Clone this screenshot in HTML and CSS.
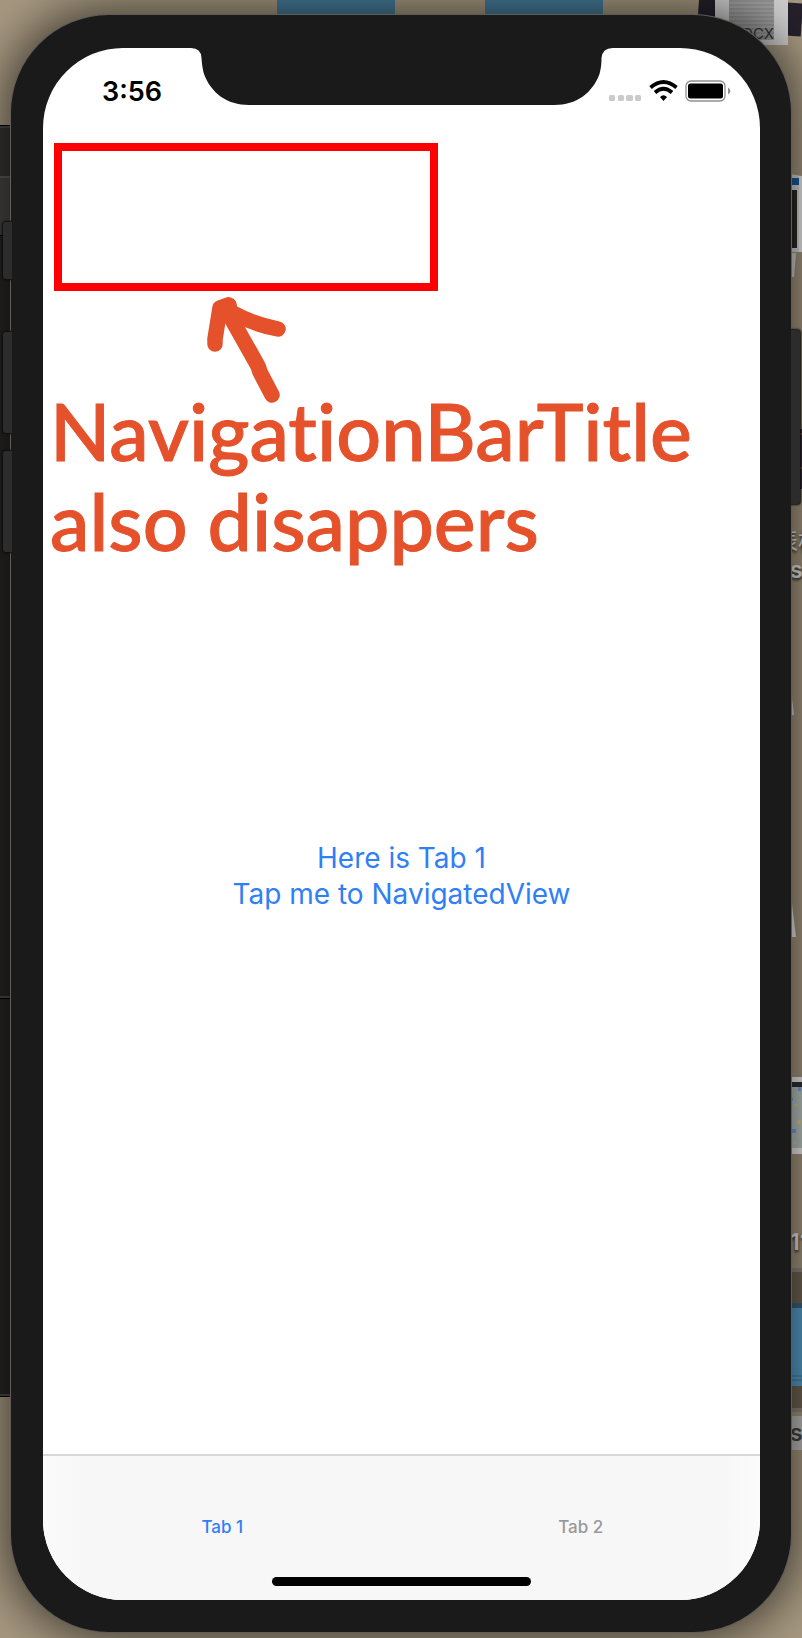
FILE: index.html
```html
<!DOCTYPE html>
<html lang="en">
<head>
<meta charset="utf-8">
<meta name="viewport" content="width=device-width, initial-scale=1">
<title>Tab 1</title>
<link rel="stylesheet" href="styles.css">
</head>
<body>
<div class="desktop">
  <div class="window window-back"></div>
  <div class="window window-front"></div>
  <div class="window window-low"></div>
  <div class="folder folder-a"></div>
  <div class="folder folder-b"></div>
  <div class="sheet"></div>
  <div class="docx"><span class="docx-preview"></span><span class="docx-label">DOCX</span></div>
  <svg class="edge-items" width="12" height="1638" viewBox="0 0 12 1638" aria-hidden="true">
    <path d="M0 174l12 2v76H0z" fill="#d9d9d9"/>
    <path d="M0 178h12v7H0z" fill="#185ca0"/>
    <path d="M0 187h9v65H0z" fill="#d9d9d9"/>
    <path d="M0 190h7v58H0z" fill="#2b2824"/>
    <path d="M9 176h3v76H9z" fill="#eee"/>
    <path d="M0 253h6l-2 24H0z" fill="#d6d6d6"/>
    <path d="M8 429h4v60H8z" fill="#3c2c48"/>
    <path d="M8 434h4M8 468h4" stroke="#a05a2c" stroke-width="2"/>
    <path d="M0 645q4 14 0 36zM0 682l4 33H0z" fill="#e0e0e0"/>
    <path d="M0 888l6 49H0z" fill="#eee"/>
    <path d="M0 1077h12v77H0z" fill="#eee"/>
    <path d="M0 1082h12v5H0z" fill="#303030"/>
    <path d="M0 1087h12v61H0z" fill="#bcc6c1"/>
    <path d="M0 1098h3v3H0zM8 1087h3v4H8zM2 1129h4v4H2z" fill="#7aa5e0"/>
    <path d="M4 1104h4v3H4zM7 1120h4v4H7zM3 1141h3v3H3z" fill="#d8ca98"/>
    <path d="M0 1268h12v140H0z" fill="#706453"/>
    <path d="M0 1268h12v4H0zM0 1408h12v4H0z" fill="#8f867b"/>
    <path d="M0 1303h12v83H0z" fill="#589fc9"/>
    <path d="M0 1303h12v5H0z" fill="#3b637b"/>
    <path d="M0 1376h12M0 1380h12" stroke="#417899"/>
    <path d="M0 1416h12v34H0z" fill="#bfbebd"/>
  </svg>
  <span class="icon-name icon-name-a">表格</span>
  <span class="icon-name icon-name-b">s</span>
  <span class="icon-name icon-name-c">11</span>
  <span class="icon-name icon-name-d">s</span>

  <div class="phone">
    <span class="key key-mute"></span>
    <span class="key key-up"></span>
    <span class="key key-down"></span>
    <span class="key key-power"></span>
    <div class="screen">
      <header class="status">
        <time class="clock">3:56</time>
        <svg class="notch" viewBox="0 0 401 58" preserveAspectRatio="none" aria-hidden="true">
          <path d="M-10 -1V0Q0 0 0.500 10C1 18 2 22 3 26C10 45 26 57 48 57H353C375 57 391 45 398 26C399 22 400 18 400 10Q401 0 411 0V-1Z" fill="#1a1a1a"/>
        </svg>
        <svg class="signals" width="124" height="24" viewBox="0 0 124 24" role="img" aria-label="No signal, Wi-Fi, battery full">
          <g fill="#cbcbcb">
            <rect x="0" y="15" width="6" height="6" rx="1.500"/>
            <rect x="9" y="15" width="6" height="6" rx="1.500"/>
            <rect x="17" y="15" width="7" height="6" rx="1.500"/>
            <rect x="26" y="15" width="6" height="6" rx="1.500"/>
          </g>
          <g fill="none" stroke="#000">
            <path d="M41.500 7.500Q54.500-3.500 67.500 7.500" stroke-width="3.800"/>
            <path d="M46 12.500Q54.500 5 63 12.500" stroke-width="3.800"/>
          </g>
          <path d="M51 17Q54.500 13.500 58 17L54.500 21z"/>
          <rect x="77" y="1" width="39" height="20" rx="5" fill="none" stroke="#8f8f8f" stroke-width="1.300"/>
          <rect x="79" y="3.500" width="35" height="15" rx="2.500"/>
          <path d="M119 7.500q5 3.500 0 7z" fill="#8f8f8f"/>
        </svg>
      </header>
      <section class="note">
        <div class="frame"></div>
        <svg class="arrow" width="80" height="108" viewBox="0 0 80 108" aria-hidden="true">
          <g fill="none" stroke="#e4512b" stroke-width="15.500" stroke-linecap="round" stroke-linejoin="round">
            <path d="M8 48V43L13 12L21 9"/>
            <path d="M22 9L24 22L51 70L53 76L65 99"/>
            <path d="M14 12L28 18Q46 28 71 33"/>
          </g>
        </svg>
        <h1 class="note-text">NavigationBarTitle<br>also disappers</h1>
      </section>
      <main class="content">
        <a class="nav-link" href="#navigated">Here is Tab 1<br>Tap me to NavigatedView</a>
      </main>
      <footer class="bottom">
        <nav class="tabs">
          <button class="tab tab-active" type="button">Tab 1</button>
          <button class="tab" type="button">Tab 2</button>
        </nav>
        <div class="home"></div>
      </footer>
    </div>
  </div>
</div>
</body>
</html>
```
FILE: styles.css
```css
* { box-sizing: border-box; }

body {
  margin: 0;
  font-family: Inter, "Liberation Sans", sans-serif;
}

.desktop {
  position: relative;
  display: flex;
  min-height: 100vh;
  padding: 15px 11px 6px;
  overflow: hidden;
  background: #a5977f;
}

.window {
  position: absolute;
  left: 0;
  width: 40px;
  border: solid #4a4845;
  border-width: 2px 0;
  outline: 1px solid #000;
}
.window-back { top: 126px; height: 1270px; background: #262522; }
.window-front { top: 126px; height: 110px; background: linear-gradient(#343332 48px, #5a5958 48px 50px, #454442 50px); border-bottom: 0; }
.window-low { top: 236px; height: 762px; background: #262522; border-top: 0; }

.folder {
  position: absolute;
  top: 0;
  width: 118px;
  height: 60px;
  background: #457c9a;
}
.folder-a { left: 277px; }
.folder-b { right: 199px; }

.sheet {
  position: absolute;
  top: 0;
  right: 0;
  width: 104px;
  height: 33px;
  background: #25202b;
  transform: rotate(4deg);
}
.docx {
  position: absolute;
  top: 0;
  right: 14px;
  width: 73px;
  height: 45px;
  padding-left: 14px;
  background: #ccc;
}
.docx-preview {
  display: block;
  width: 45px;
  height: 40px;
  background: repeating-linear-gradient(#909090 0 2px, #9c9c9c 2px 4px);
}
.docx-label {
  position: absolute;
  right: 14px;
  bottom: 3px;
  color: #333;
  font-size: 15px;
  line-height: 16px;
}

.edge-items {
  position: absolute;
  top: 0;
  right: 0;
}
.icon-name {
  position: absolute;
  left: calc(100% - 12px);
  color: #e9e7e4;
  font-size: 23px;
  font-weight: 600;
  line-height: 28px;
  white-space: nowrap;
  text-shadow: 0 2px 3px #222;
}
.icon-name-a { top: 525px; left: calc(100% - 27px); font-family: "Noto Sans CJK SC", sans-serif; font-weight: 400; }
.icon-name-b { top: 556px; }
.icon-name-c { top: 1228px; }
.icon-name-d { top: 1419px; color: #444; text-shadow: none; }

.phone {
  position: relative;
  display: flex;
  flex: 1;
  min-width: 0;
  padding: 33px 31px 32px 32px;
  border-radius: 98px;
  background: #1a1a1a;
  box-shadow: 0 0 0 1px #605d57, 0 0 44px 10px rgba(0, 0, 0, 0.55);
}

.key {
  position: absolute;
  left: -8px;
  width: 9px;
  border-radius: 3px 0 0 3px;
  background: #2c2c2c;
  box-shadow: 0 0 2px 1px #0d0d0d;
  clip-path: inset(-3px 0 -3px -3px);
}
.key-mute { top: 207px; height: 57px; }
.key-up { top: 317px; height: 101px; }
.key-down { top: 436px; height: 101px; }
.key-power {
  top: 315px;
  right: -9px;
  left: auto;
  height: 174px;
  border-radius: 0 3px 3px 0;
  clip-path: inset(-3px -3px -3px 0);
}

.screen {
  display: flex;
  flex: 1;
  flex-direction: column;
  min-width: 0;
  overflow: hidden;
  border-radius: 80px;
  background: #fff;
}

.status {
  display: grid;
  grid-template-columns: 1fr 56% 1fr;
  height: 95px;
}
.clock {
  padding: 28px 0 0 59px;
  font-size: 27px;
  font-weight: 600;
  line-height: 32px;
}
.notch {
  width: 100%;
  height: 58px;
  overflow: visible;
}
.signals {
  margin: 32px 0 0 7px;
}

.note {
  padding: 0 8px 0 11px;
}
.frame {
  width: 384px;
  max-width: 100%;
  height: 148px;
  border: 8px solid #f00;
}
.arrow {
  display: block;
  margin: 5px 0 0 153px;
}
.note-text {
  margin: -18px 0 0 -4px;
  color: #e4512b;
  font-family: Lato, "Noto Sans", sans-serif;
  font-size: 79px;
  font-weight: 500;
  font-variant-ligatures: none;
  line-height: 90px;
  -webkit-text-stroke: 1px #e4512b;
}

.content {
  flex: 1;
  padding: 274px 16px 40px;
  text-align: center;
}
.nav-link {
  display: inline-block;
  color: #2f7ff6;
  font-size: 28px;
  line-height: 36px;
  text-decoration: none;
}

.bottom {
  display: flex;
  flex-direction: column;
  align-items: center;
  padding-bottom: 14px;
  border-top: 2px solid #d8d8d8;
  background: linear-gradient(90deg, #fbfbfb, #f7f7f7 6% 94%, #fbfbfb);
}
.tabs {
  display: flex;
  width: 100%;
}
.tab {
  flex: 1;
  height: 121px;
  padding: 58px 0 37px;
  border: 0;
  background: none;
  color: #999;
  font: 500 17px/24px Inter, "Liberation Sans", sans-serif;
}
.tab-active { color: #2f7ff6; }
.home {
  width: 36%;
  height: 9px;
  border-radius: 5px;
  background: #000;
}
```
